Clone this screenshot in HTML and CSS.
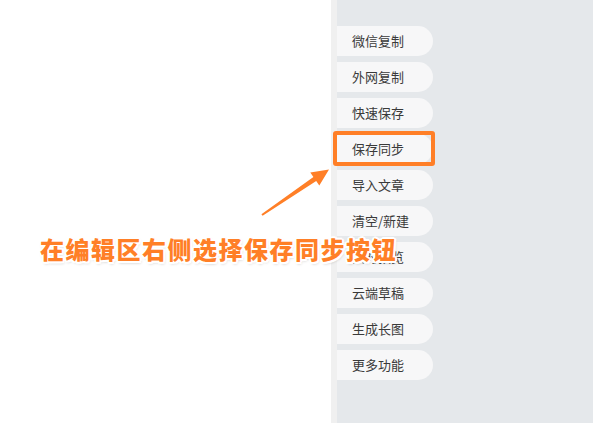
FILE: index.html
```html
<!DOCTYPE html>
<html lang="zh">
<head>
<meta charset="utf-8">
<link rel="stylesheet" href="styles.css">
</head>
<body>
<div class="page">
  <div class="editor"></div>
  <div class="strip"></div>
  <div class="panel">
    <div class="btn">微信复制</div>
    <div class="btn">外网复制</div>
    <div class="btn">快速保存</div>
    <div class="btn">保存同步</div>
    <div class="btn">导入文章</div>
    <div class="btn">清空/新建</div>
    <div class="btn">实时预览</div>
    <div class="btn">云端草稿</div>
    <div class="btn">生成长图</div>
    <div class="btn">更多功能</div>
  </div>
  <div class="highlight"></div>
  <svg class="arrow" width="593" height="423" viewBox="0 0 593 423">
    <polygon points="261.4,214.2 313.4,176.9 310.3,172.4 329,169.5 319.3,185.6 316.2,181.1 262.6,215.8" fill="#ff7f27"/>
  </svg>
  <div class="note">在编辑区右侧选择保存同步按钮</div>
</div>
</body>
</html>
```

FILE: styles.css
```css
html, body {
  margin: 0;
  padding: 0;
}
body {
  background: #ffffff;
  font-family: "Noto Sans CJK SC", "Noto Sans", sans-serif;
}
.page {
  position: relative;
  display: flex;
  width: 593px;
  height: 423px;
  overflow: hidden;
}
.editor {
  width: 331px;
  background: #ffffff;
}
.strip {
  width: 6px;
  background: #f0f0f0;
}
.panel {
  flex: 1;
  background: #e5e8eb;
  display: flex;
  flex-direction: column;
  align-items: flex-start;
  gap: 6px;
  padding-top: 26px;
}
.btn {
  width: 81px;
  height: 30px;
  padding-left: 15px;
  background: #f7f7f8;
  border-radius: 0 15px 15px 0;
  font-size: 13px;
  line-height: 30px;
  color: #3a3a3a;
  white-space: nowrap;
}
.highlight {
  position: absolute;
  left: 333px;
  top: 131px;
  width: 94px;
  height: 27px;
  border: 4px solid #ff7f27;
  border-radius: 3px;
}
.arrow {
  position: absolute;
  left: 0;
  top: 0;
}
.note {
  position: absolute;
  left: 40px;
  top: 232px;
  font-size: 24px;
  font-weight: 900;
  letter-spacing: 1.5px;
  line-height: 34px;
  color: #ff7f27;
  white-space: nowrap;
  text-shadow:
    2px 0 0 #fff, -2px 0 0 #fff, 0 2px 0 #fff, 0 -2px 0 #fff,
    1.5px 1.5px 0 #fff, -1.5px 1.5px 0 #fff, 1.5px -1.5px 0 #fff, -1.5px -1.5px 0 #fff,
    1px 2px 3px rgba(0,0,0,0.25);
}
```
